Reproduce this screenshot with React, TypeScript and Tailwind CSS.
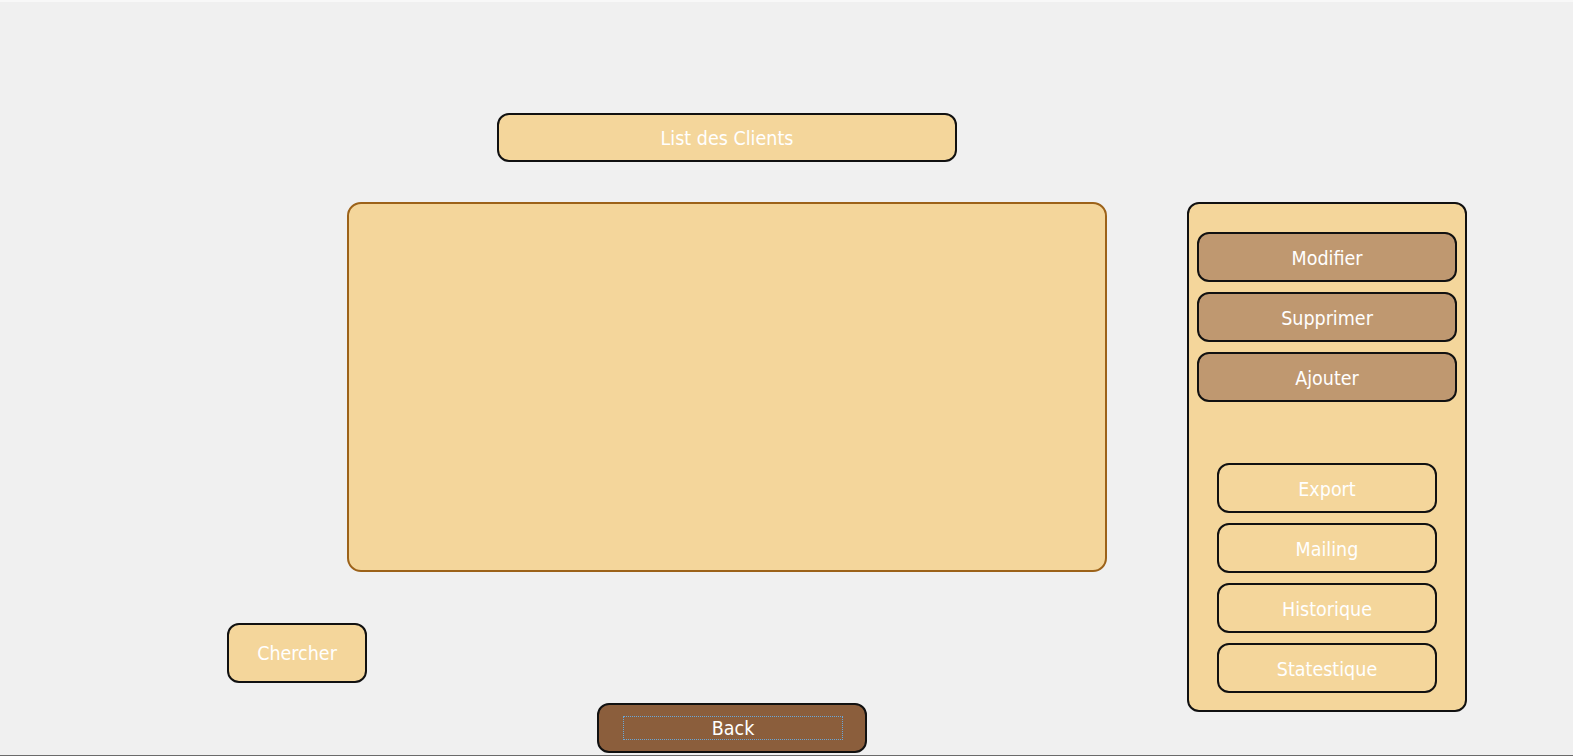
import React from "react";

const font = { fontFamily: '"DejaVu Sans Condensed", "DejaVu Sans", Tahoma, Verdana, sans-serif', fontStretch: "condensed" as const };

function Btn({ label, dark }: { label: string; dark?: boolean }) {
  return (
    <div
      className={`flex items-center justify-center rounded-[12px] border-2 border-[#111111] text-white text-[19.5px] h-[50px] pt-[3px] ${
        dark ? "w-[260px] bg-[#bf9870]" : "w-[220px] bg-[#f4d69b]"
      }`}
    >
      {label}
    </div>
  );
}

export default function App() {
  return (
    <div
      className="w-[1573px] h-[756px] bg-[#f0f0f0] border-t-2 border-t-[#f8f8f8] border-b border-b-[#6a6a6a] overflow-hidden pt-[111px]"
      style={font}
    >
      <div className="ml-[497px] w-[460px] h-[49px] pt-[2px] flex items-center justify-center rounded-[12px] border-2 border-[#111111] bg-[#f4d69b] text-white text-[19.5px]">
        List des Clients
      </div>
      <div className="flex mt-[40px]">
        <div className="w-[1187px] flex flex-col">
          <div className="ml-[347px] w-[760px] h-[370px] rounded-[14px] border-2 border-[#9c6219] bg-[#f4d69b]" />
          <div className="ml-[227px] mt-[51px] w-[140px] h-[60px] pt-[2px] flex items-center justify-center rounded-[12px] border-2 border-[#111111] bg-[#f4d69b] text-white text-[19.5px]">
            Chercher
          </div>
          <div className="ml-[597px] mt-[20px] w-[270px] h-[50px] flex items-center justify-center rounded-[12px] border-2 border-[#111111] bg-[#8b5e3c] text-white text-[19.5px]">
            <span className="w-[220px] h-[24px] ml-[2px] pt-[1px] flex items-center justify-center border border-dotted border-[#6aa7d9] leading-none">
              Back
            </span>
          </div>
        </div>
        <div className="w-[280px] h-[510px] rounded-[12px] border-2 border-[#111111] bg-[#f4d69b] flex flex-col items-center pt-[28px]">
          <div className="flex flex-col gap-[10px]">
            <Btn label="Modifier" dark />
            <Btn label="Supprimer" dark />
            <Btn label="Ajouter" dark />
          </div>
          <div className="flex flex-col gap-[10px] mt-[61px]">
            <Btn label="Export" />
            <Btn label="Mailing" />
            <Btn label="Historique" />
            <Btn label="Statestique" />
          </div>
        </div>
      </div>
    </div>
  );
}
